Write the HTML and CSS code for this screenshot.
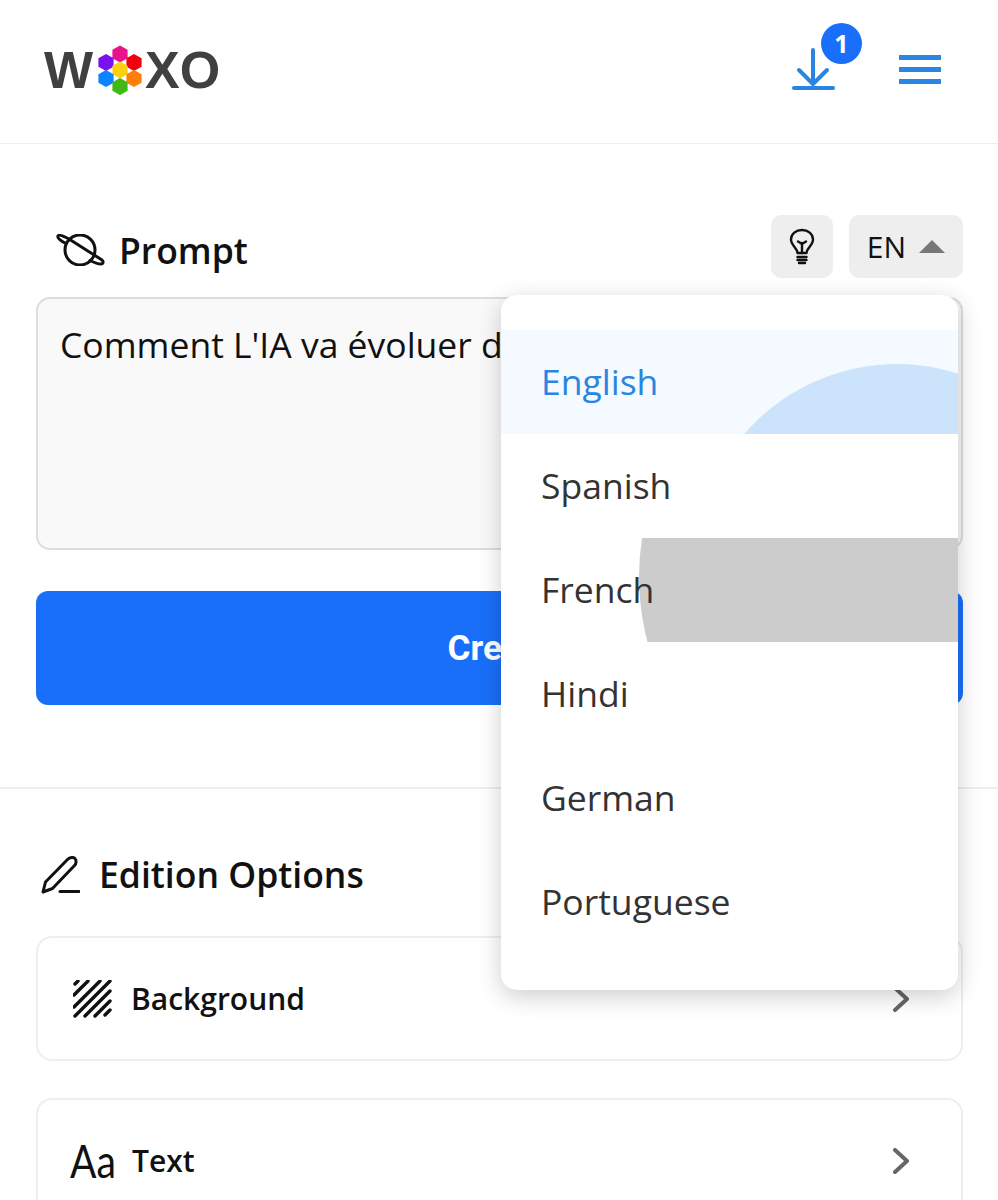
FILE: index.html
```html
<!DOCTYPE html>
<html lang="en">
<head>
	<meta charset="UTF-8">
	<title>Woxo</title>
	<link rel="stylesheet" href="styles.css">
</head>
<body>
	<div class="page">
		<header class="topbar">
			<div class="logo">
				<span>W</span>
				<svg class="logo-hex" width="46" height="50" viewBox="0 0 46 50">
					<defs><polygon id="hex" points="0,-8.6 7.6,-4.3 7.6,4.3 0,8.6 -7.6,4.3 -7.6,-4.3"/></defs>
					<use href="#hex" x="23" y="9" fill="#e8128c"/>
					<use href="#hex" x="9" y="17.5" fill="#7a12f0"/>
					<use href="#hex" x="37" y="17.5" fill="#f00010"/>
					<use href="#hex" x="23" y="25" fill="#ffd010"/>
					<use href="#hex" x="9" y="33.5" fill="#0a84ff"/>
					<use href="#hex" x="37" y="33.5" fill="#ff8008"/>
					<use href="#hex" x="23" y="41.5" fill="#40b814"/>
				</svg>
				<span>XO</span>
			</div>
			<div class="top-actions">
				<div class="download">
					<svg width="44" height="44" viewBox="0 0 44 44" fill="none" stroke="#2a85e0" stroke-width="4" stroke-linecap="round" stroke-linejoin="round">
						<path d="M21 2V36M7 22L21 36L35 22"/>
						<path d="M2 40H41"/>
					</svg>
					<span class="badge">1</span>
				</div>
				<div class="burger"><i></i><i></i><i></i></div>
			</div>
		</header>

		<section class="prompt">
			<div class="prompt-head">
				<h2 class="prompt-title">
					<svg width="50" height="32" viewBox="0 0 50 32" fill="none" stroke="#111" stroke-width="3" stroke-linecap="round" stroke-linejoin="round">
						<circle cx="25" cy="16" r="15"/>
						<path d="M11 9.5C6 7 2 4 3 2C4 0 10 3 14 5L36 19L47 26C49 28 48 30 46 30C42 30 38 28 35 26.5"/>
					</svg>
					Prompt
				</h2>
				<div class="prompt-tools">
					<div class="tool tool-bulb">
						<svg width="26" height="38" viewBox="0 0 26 38" fill="none" stroke="#111" stroke-width="2.4" stroke-linecap="round" stroke-linejoin="round">
							<path d="M8.5 25C8.5 20 2 17.5 2 11.5C2 6 7 2 13 2C19 2 24 6 24 11.5C24 17.5 17.5 20 17.5 25Z"/>
							<path d="M13 25V15M9 13.5L13 16L17 13.5"/>
							<path d="M8.5 29H17.5M8.5 32H17.5M10 35H16"/>
						</svg>
					</div>
					<div class="tool tool-lang">EN <span class="caret"></span></div>
				</div>
			</div>
			<div class="prompt-box">Comment L'IA va évoluer d</div>
			<button class="create">Create</button>
		</section>

		<section class="options">
			<h2 class="options-title">
				<svg width="40" height="40" viewBox="0 0 40 40" fill="none" stroke="#111" stroke-width="3" stroke-linecap="round" stroke-linejoin="round">
					<path d="M3 37L5.5 27L27.5 4.5C30 2 33.5 2 35 3.5C36.5 5 36.5 8.5 34.5 10.5L12.5 33.5Z"/>
					<path d="M20 36.5H39"/>
				</svg>
				Edition Options
			</h2>
			<div class="option-card">
				<svg class="option-icon" width="40" height="38" viewBox="0 0 40 38" fill="none" stroke="#111" stroke-width="3.4" stroke-linecap="round">
					<path d="M2 4L5 1M1 15L15 1M1 27L27 1M2 36L37 1M12 36L37 11M22 36L37 21M32 35L37 30"/>
				</svg>
				<span class="option-name">Background</span>
				<svg class="chevron" width="18" height="26" viewBox="0 0 18 26" fill="none" stroke="#666" stroke-width="4" stroke-linecap="round" stroke-linejoin="round">
					<path d="M3 2L15 13L3 24"/>
				</svg>
			</div>
			<div class="option-card">
				<span class="option-aa">Aa</span>
				<span class="option-name">Text</span>
				<svg class="chevron" width="18" height="26" viewBox="0 0 18 26" fill="none" stroke="#666" stroke-width="4" stroke-linecap="round" stroke-linejoin="round">
					<path d="M3 2L15 13L3 24"/>
				</svg>
			</div>
		</section>

		<!-- language menu, open -->
		<ul class="lang-menu">
			<li class="current"><span class="ripple ripple-blue"></span><span class="lang-name">English</span></li>
			<li><span class="lang-name">Spanish</span></li>
			<li><span class="ripple ripple-grey"></span><span class="lang-name">French</span></li>
			<li><span class="lang-name">Hindi</span></li>
			<li><span class="lang-name">German</span></li>
			<li><span class="lang-name">Portuguese</span></li>
		</ul>
	</div>
</body>
</html>
```

FILE: styles.css
```css
/*css reset*/
html,body,div,ul,li,h2,section,header{
	padding: 0;
	margin: 0;
}
ul{list-style-type: none;}
body{
	background: #fff;
	color: #111;
	font-family: "Open Sans", "Noto Sans", sans-serif;
}

/*page*/
.page{
	width: 998px;
	height: 1200px;
	overflow: hidden;
	position: relative;
}

/*top bar*/
.topbar{
	height: 143px;
	padding: 0 57px 0 44px;
	border-bottom: 1px solid #eee;
	display: flex;
	align-items: center;
	justify-content: space-between;
}
.logo{
	display: flex;
	align-items: center;
	margin-bottom: 4px;
	color: #404040;
	font: bold 52px/1 "Liberation Sans", Arial, sans-serif;
}
.logo-hex{margin: 0 2px 0 4px;}
.top-actions{
	display: flex;
	align-items: center;
	gap: 63px;
	margin-bottom: 4px;
}
.download{
	width: 44px;
	height: 44px;
	position: relative;
}
.badge{
	width: 41px;
	height: 41px;
	line-height: 41px;
	text-align: center;
	border-radius: 50%;
	background: #1a6ffa;
	color: #fff;
	font-size: 25px;
	font-weight: 700;
	position: absolute;
	top: -25px;
	left: 29px;
}
.burger{
	width: 42px;
	display: flex;
	flex-direction: column;
	gap: 7px;
}
.burger i{
	height: 5px;
	background: #2a85e0;
}

/*prompt*/
.prompt{
	padding: 71px 35px 82px 36px;
	border-bottom: 2px solid #eee;
}
.prompt-head{
	display: flex;
	justify-content: space-between;
	margin-bottom: 19px;
}
.prompt-title{
	display: flex;
	align-items: center;
	gap: 14px;
	padding: 6px 0 0 19px;
	font-size: 35.5px;
	font-weight: 600;
}
.prompt-tools{
	display: flex;
	gap: 16px;
}
.tool{
	height: 63px;
	background: #eee;
	border-radius: 10px;
	display: flex;
	align-items: center;
	justify-content: center;
}
.tool-bulb{width: 62px;}
.tool-lang{
	width: 114px;
	gap: 13px;
	font-size: 30px;
}
.caret{
	border-left: 13px solid transparent;
	border-right: 13px solid transparent;
	border-bottom: 13px solid #777;
}
.prompt-box{
	height: 253px;
	box-sizing: border-box;
	padding: 22px 22px;
	background: #f9f9f9;
	border: 2px solid #ddd;
	border-radius: 14px;
	font-size: 35.5px;
	line-height: 46px;
}
.create{
	width: 100%;
	height: 114px;
	margin-top: 41px;
	display: block;
	background: #1a6ffa;
	border: 0;
	border-radius: 12px;
	color: #fff;
	font: bold 35px Roboto, sans-serif;
}

/*edition options*/
.options{padding: 61px 35px 0 36px;}
.options-title{
	display: flex;
	align-items: center;
	gap: 19px;
	padding-left: 4px;
	margin-bottom: 37px;
	font-size: 35.5px;
	font-weight: 600;
	line-height: 49px;
}
.option-card{
	height: 125px;
	box-sizing: border-box;
	padding: 0 51px 0 32px;
	margin-bottom: 37px;
	border: 2px solid #eee;
	border-radius: 16px;
	display: flex;
	align-items: center;
}
.option-icon{margin: 0 18px 0 3px;}
.option-name{
	font-size: 30px;
	font-weight: 600;
}
.option-aa{
	width: 62px;
	font: 400 46px/1 Lato, sans-serif;
	transform: scaleX(.85);
	transform-origin: left center;
}
.chevron{margin-left: auto;}

/*language menu*/
.lang-menu{
	width: 457px;
	height: 695px;
	box-sizing: border-box;
	padding-top: 35px;
	background: #fff;
	border-radius: 16px;
	box-shadow: 0 6px 24px rgba(0,0,0,.2);
	position: absolute;
	top: 295px;
	left: 501px;
	overflow: hidden;
}
.lang-menu li{
	height: 104px;
	padding-left: 40px;
	color: #333;
	font-size: 35.5px;
	line-height: 102px;
	position: relative;
	overflow: hidden;
}
.lang-menu li.current{
	background: #f4faff;
	color: #2a85e0;
}
.lang-name{position: relative;}
.ripple{
	border-radius: 50%;
	position: absolute;
}
.ripple-blue{
	width: 404px;
	height: 404px;
	top: 34px;
	left: 194px;
	background: #cce4fb;
}
.ripple-grey{
	width: 500px;
	height: 500px;
	top: -211px;
	left: 138px;
	background: #ccc;
}
```
